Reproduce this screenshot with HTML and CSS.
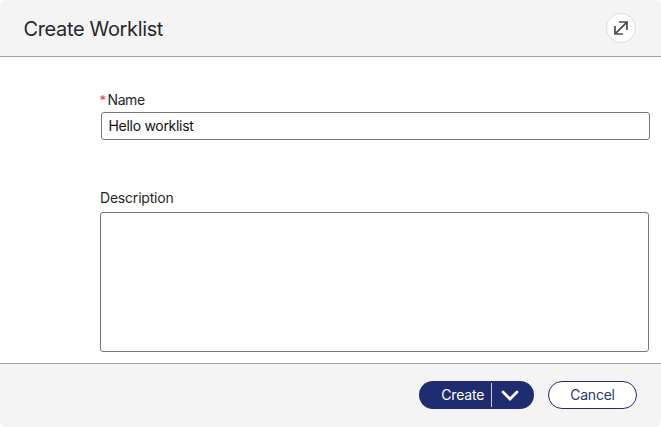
FILE: index.html
```html
<!DOCTYPE html>
<html lang="en">
<head>
<meta charset="utf-8">
<title>Create Worklist</title>
<link rel="stylesheet" href="styles.css">
</head>
<body>
<section class="dialog">
  <header class="dialog-header">
    <h1 class="title">Create Worklist</h1>
    <button class="expand" aria-label="Expand">
      <svg width="14" height="14" viewBox="0 0 14 14" fill="none" stroke="#4d4d4d" stroke-width="1.7"><path d="M5 1h8v8M1 5v8h8M12.700 1.300L1.300 12.700"/></svg>
    </button>
  </header>
  <main class="dialog-body">
    <label class="label name-label" for="name"><span class="required">*</span><span>Name</span></label>
    <input class="name-input" id="name" value="Hello worklist">
    <label class="label desc-label" for="desc">Description</label>
    <textarea class="desc-input" id="desc"></textarea>
  </main>
  <footer class="dialog-footer">
    <div class="split">
      <button class="create">Create</button>
      <button class="menu" aria-label="More options"><svg width="18" height="12" viewBox="0 0 18 12" fill="none" stroke="#fff" stroke-width="2.700" stroke-linecap="round"><path d="M2 3l7 7 7-7"/></svg></button>
    </div>
    <button class="cancel">Cancel</button>
  </footer>
</section>
</body>
</html>
```
FILE: styles.css
```css
* { box-sizing: border-box; }
body { margin: 0; background: #fff; color: #26282c; font: 14px/20px Inter, sans-serif; }
button { font: inherit; padding: 0; border: 0; display: flex; align-items: center; justify-content: center; }
.dialog { height: 427px; display: flex; flex-direction: column; overflow: hidden; }
.dialog-header { height: 57px; flex: none; display: flex; align-items: center; justify-content: space-between; padding: 0 25px 0 24px; background: #f4f4f4; border-bottom: 1px solid #a3a3a3; border-radius: 6px 6px 0 0; }
.title { margin: 2px 0 0 -0.5px; font-size: 20px; line-height: 28px; font-weight: 400; letter-spacing: -0.35px; }
.expand { width: 30px; height: 30px; border: 1px solid #ddd; border-radius: 50%; background: #fff; }
.dialog-body { flex: 1; display: flex; flex-direction: column; padding: 33px 12px 0 100px; }
.label { height: 20px; letter-spacing: -0.2px; }
.name-label { display: flex; letter-spacing: -0.4px; }
.required { width: 8px; margin-left: -0.5px; color: #e03c3c; font-size: 13px; }
.name-input { flex: none; height: 28px; margin: 2px -1px 0 1px; padding: 0 7px 2px 6.5px; border: 1px solid #777; border-radius: 3px; font: inherit; letter-spacing: -0.3px; color: #111; }
.desc-label { margin-top: 48px; }
.desc-input { height: 140px; margin: 4px 0 0; border: 1px solid #777; border-radius: 3px; resize: none; }
.dialog-footer { height: 64px; flex: none; display: flex; align-items: center; justify-content: flex-end; gap: 14px; padding: 0 24px 2px; background: #f4f4f4; border-top: 1px solid #a3a3a3; border-radius: 0 0 6px 6px; }
.split { display: flex; align-items: center; width: 115px; height: 28px; border-radius: 14px; overflow: hidden; background: #202c70; }
.create { width: 73px; height: 24px; padding-left: 15.5px; border-right: 1px solid #c7cadb; color: #fff; background: none; letter-spacing: -0.2px; }
.menu { width: 42px; background: none; padding-right: 6px; }
.cancel { width: 89px; height: 28px; border: 1px solid #202c70; border-radius: 14px; color: #2b3670; background: #fff; letter-spacing: -0.25px; }
```
